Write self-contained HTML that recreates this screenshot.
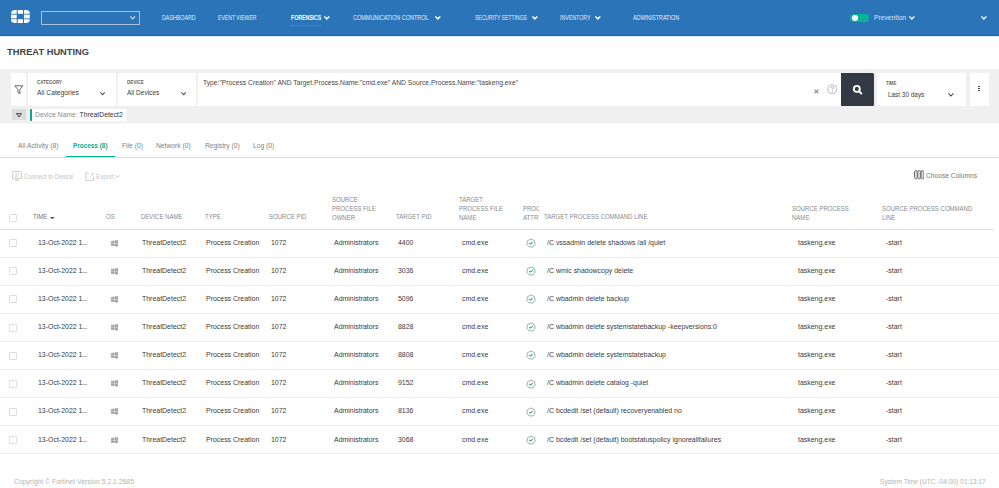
<!DOCTYPE html>
<html><head><meta charset="utf-8">
<style>
html,body{margin:0;padding:0;width:999px;height:488px;overflow:hidden;background:#fff;font-family:"Liberation Sans",sans-serif;}
.a{position:absolute;}
.t{position:absolute;white-space:nowrap;line-height:1;transform-origin:0 0;}
#hdr{position:absolute;left:0;top:0;width:999px;height:35px;background:#2c74b8;border-bottom:1px solid #1f66ad;box-shadow:0 1px 1px rgba(60,130,200,.18);}
.nav{color:#e3edf7;font-size:6px;transform:scaleX(.9);}
.chev{position:absolute;width:3px;height:3px;border-right:1.3px solid #fff;border-bottom:1.3px solid #fff;transform:rotate(45deg);}
.dchev{position:absolute;width:3.2px;height:3.2px;border-right:1px solid #555;border-bottom:1px solid #555;transform:rotate(45deg);}
#band{position:absolute;left:0;top:69px;width:999px;height:54px;background:#f0f0f0;box-shadow:0 1px 0 #f8f8f8;}
.box{position:absolute;background:#fff;border-radius:1.5px;}
.lbl{font-size:5px;font-weight:bold;color:#666;transform:scaleX(.9);}
.val{font-size:6.75px;color:#3a3a3a;}
.tab{font-size:7.1px;color:#828282;transform:scaleX(.95);}
.th{font-size:7px;color:#8a8a8a;line-height:8.7px;transform:scaleX(.86);}
.td{font-size:7.4px;color:#3a3a3a;transform:scaleX(.94);}
.hl{position:absolute;left:0;width:999px;height:1px;background:#ededed;}
.cb{position:absolute;width:6px;height:6px;border:1px solid #dedede;border-radius:1px;background:#fff;box-sizing:content-box;}
</style></head>
<body>
<div id="hdr"></div>
<svg class="a" style="left:11.2px;top:10.1px" width="18.8" height="13" viewBox="0 0 18.8 13"><g fill="#fff">
<path d="M0 3.8 Q0 0 3.8 0 H5.7 V3.8 Z"/><rect x="6.75" y="0" width="5.2" height="3.8"/><path d="M13 0 H15 Q18.8 0 18.8 3.8 H13 Z"/>
<rect x="0" y="4.6" width="5.7" height="3.8"/><rect x="13" y="4.6" width="5.8" height="3.8"/>
<path d="M0 9.2 H5.7 V13 H3.8 Q0 13 0 9.2 Z"/><rect x="6.75" y="9.2" width="5.2" height="3.8"/><path d="M13 9.2 H18.8 Q18.8 13 15 13 H13 Z"/>
</g></svg>
<div class="a" style="left:41px;top:11px;width:96.6px;height:11.8px;border:1px solid #a9c2d8;"></div>
<div class="t nav" style="left:161.8px;top:15.1px;font-size:6.3px;transform:scaleX(0.845)">DASHBOARD</div>
<div class="t nav" style="left:217.7px;top:15.1px;font-size:6.3px;transform:scaleX(0.811)">EVENT VIEWER</div>
<div class="t nav" style="left:290.5px;top:15.1px;font-size:6.3px;transform:scaleX(0.824);font-weight:bold;color:#fff">FORENSICS</div>
<div class="t nav" style="left:353.3px;top:15.1px;font-size:6.3px;transform:scaleX(0.873)">COMMUNICATION CONTROL</div>
<div class="t nav" style="left:475.3px;top:15.1px;font-size:6.3px;transform:scaleX(0.800)">SECURITY SETTINGS</div>
<div class="t nav" style="left:559.9px;top:15.1px;font-size:6.3px;transform:scaleX(0.835)">INVENTORY</div>
<div class="t nav" style="left:632.6px;top:15.1px;font-size:6.3px;transform:scaleX(0.863)">ADMINISTRATION</div>
<svg class="a" style="left:128.6px;top:14.6px" width="7.4" height="5.2" viewBox="-1 -1 7.4 5.2"><path d="M0.4 0.4 L2.7 2.8000000000000003 L5.0 0.4" fill="none" stroke="#d3dbe3" stroke-width="1.2"/></svg>
<svg class="a" style="left:323.4px;top:14.9px" width="7.7" height="5.3" viewBox="-1 -1 7.7 5.3"><path d="M0.4 0.4 L2.85 2.9 L5.3 0.4" fill="none" stroke="#fff" stroke-width="1.5"/></svg>
<svg class="a" style="left:433.8px;top:14.9px" width="7.7" height="5.3" viewBox="-1 -1 7.7 5.3"><path d="M0.4 0.4 L2.85 2.9 L5.3 0.4" fill="none" stroke="#fff" stroke-width="1.5"/></svg>
<svg class="a" style="left:531.3px;top:14.9px" width="7.7" height="5.3" viewBox="-1 -1 7.7 5.3"><path d="M0.4 0.4 L2.85 2.9 L5.3 0.4" fill="none" stroke="#fff" stroke-width="1.5"/></svg>
<svg class="a" style="left:594px;top:14.9px" width="7.7" height="5.3" viewBox="-1 -1 7.7 5.3"><path d="M0.4 0.4 L2.85 2.9 L5.3 0.4" fill="none" stroke="#fff" stroke-width="1.5"/></svg>
<div class="a" style="left:290.2px;top:25px;width:30.9px;height:1.3px;background:#0aab8f"></div>
<div class="a" style="left:850.3px;top:13.8px;width:19px;height:8.2px;border-radius:4.1px;background:#07b595"></div>
<div class="a" style="left:852.4px;top:14.9px;width:6px;height:6px;border-radius:50%;background:#fff"></div>
<div class="t " style="left:873.7px;top:14.3px;font-size:7.3px;color:#d4e5f6;transform:scaleX(.92)">Prevention</div>
<svg class="a" style="left:907.5px;top:15px" width="7.8" height="5.4" viewBox="-1 -1 7.8 5.4"><path d="M0.4 0.4 L2.9 3.0 L5.3999999999999995 0.4" fill="none" stroke="#fff" stroke-width="1.3"/></svg>
<svg class="a" style="left:979.5px;top:14.5px" width="7.8" height="5.4" viewBox="-1 -1 7.8 5.4"><path d="M0.4 0.4 L2.9 3.0 L5.3999999999999995 0.4" fill="none" stroke="#fff" stroke-width="1.3"/></svg>
<div class="t " style="left:7px;top:47.2px;font-size:9.9px;font-weight:bold;color:#454545;transform:scaleX(.943)">THREAT HUNTING</div>
<div id="band"></div>
<div class="box" style="left:11px;top:73px;width:15px;height:33px"></div>
<div class="box" style="left:27.8px;top:73px;width:88.4px;height:33px"></div>
<div class="box" style="left:117.6px;top:73px;width:78.6px;height:33px"></div>
<div class="box" style="left:197.7px;top:73px;width:645px;height:33px;border-radius:0"></div>
<div class="a" style="left:841px;top:73px;width:33px;height:33px;background:#333a46;border-radius:0 1.5px 1.5px 0"></div>
<div class="box" style="left:877px;top:73.2px;width:88.8px;height:32.5px"></div>
<div class="box" style="left:970.3px;top:73.2px;width:18.6px;height:32.5px"></div>
<svg class="a" style="left:14.2px;top:85px" width="10" height="10" viewBox="0 0 10 10"><path d="M0.8 0.8 H8.8 L5.9 4.6 V8.6 L3.9 7.6 V4.6 Z" fill="none" stroke="#555" stroke-width="0.9" stroke-linejoin="round"/></svg>
<div class="t lbl" style="left:37px;top:80.4px;">CATEGORY</div>
<div class="t val" style="left:37px;top:90.4px;font-size:7.1px;transform:scaleX(.95)">All Categories</div>
<svg class="a" style="left:99.1px;top:90.6px" width="7.2" height="5.1" viewBox="-1 -1 7.2 5.1"><path d="M0.4 0.4 L2.6 2.7 L4.8 0.4" fill="none" stroke="#555" stroke-width="1.1"/></svg>
<div class="t lbl" style="left:127.2px;top:80.4px;">DEVICE</div>
<div class="t val" style="left:127.2px;top:90.4px;font-size:7.1px;transform:scaleX(.92)">All Devices</div>
<svg class="a" style="left:179.6px;top:90.6px" width="7.2" height="5.1" viewBox="-1 -1 7.2 5.1"><path d="M0.4 0.4 L2.6 2.7 L4.8 0.4" fill="none" stroke="#555" stroke-width="1.1"/></svg>
<div class="t val" style="left:203.3px;top:79.8px;font-size:7.1px;transform:scaleX(.949);color:#474747">Type:"Process Creation" AND Target.Process.Name:"cmd.exe" AND Source.Process.Name:"taskeng.exe"</div>
<svg class="a" style="left:813.6px;top:89px" width="5" height="5" viewBox="0 0 5 5"><path d="M0.6 0.6 L4.4 4.4 M4.4 0.6 L0.6 4.4" stroke="#8a8a8a" stroke-width="1.2"/></svg>
<svg class="a" style="left:826.6px;top:83.7px" width="10.5" height="10.5" viewBox="0 0 10.5 10.5"><circle cx="5.25" cy="5.25" r="4.5" fill="none" stroke="#a5a5a5" stroke-width="0.8"/><path d="M3.8 4.1 Q3.8 2.6 5.25 2.6 Q6.7 2.6 6.7 3.9 Q6.7 4.8 5.25 5.4 V6.4" fill="none" stroke="#a5a5a5" stroke-width="0.8"/><circle cx="5.25" cy="7.8" r="0.5" fill="#a5a5a5"/></svg>
<svg class="a" style="left:851px;top:83px" width="12" height="12" viewBox="0 0 12 12"><circle cx="5.8" cy="5.9" r="3.0" fill="none" stroke="#fff" stroke-width="1.9"/><path d="M8.2 8.3 L10.3 10.5" stroke="#fff" stroke-width="1.9" stroke-linecap="round"/></svg>
<div class="t lbl" style="left:886.4px;top:80.6px;font-size:5.2px;transform:scaleX(.83)">TIME</div>
<div class="t val" style="left:887.8px;top:90.6px;font-size:7.2px;transform:scaleX(.89)">Last 30 days</div>
<svg class="a" style="left:947.2px;top:91.8px" width="7.8" height="5.4" viewBox="-1 -1 7.8 5.4"><path d="M0.4 0.4 L2.9 3.0 L5.3999999999999995 0.4" fill="none" stroke="#444" stroke-width="1.05"/></svg>
<div class="a" style="left:978.2px;top:85.9px;width:1.4px;height:1.3px;background:#444"></div>
<div class="a" style="left:978.2px;top:88px;width:1.4px;height:1.3px;background:#444"></div>
<div class="a" style="left:978.2px;top:90.1px;width:1.4px;height:1.3px;background:#444"></div>
<div class="a" style="left:11.9px;top:109.4px;width:14px;height:10.4px;background:#dcdcdc;border-radius:1px"></div>
<svg class="a" style="left:16.4px;top:112.7px" width="6" height="4.8" viewBox="0 0 6 4.8"><path d="M0.6 0.6 H5.4 L3 4.1 Z" fill="none" stroke="#444" stroke-width="1.0" stroke-linejoin="round"/></svg>
<div class="box" style="left:29.6px;top:108.6px;width:96.4px;height:12px;border-radius:1px"></div>
<div class="a" style="left:29.6px;top:108.6px;width:2.4px;height:12px;background:#05ad90;border-radius:1px 0 0 1px"></div>
<div class="t " style="left:35px;top:111.6px;font-size:6.82px;color:#8a8a8a">Device Name: <span style="color:#333">ThreatDetect2</span></div>
<div class="t tab" style="left:18px;top:143.0px;">All Activity (8)</div>
<div class="t tab" style="left:72.8px;top:143.0px;font-weight:bold;color:#05ad90;font-size:6.9px;transform:scaleX(.93)">Process (8)</div>
<div class="t tab" style="left:121.6px;top:143.0px;">File (0)</div>
<div class="t tab" style="left:155.6px;top:143.0px;">Network (0)</div>
<div class="t tab" style="left:205px;top:143.0px;">Registry (0)</div>
<div class="t tab" style="left:253px;top:143.0px;">Log (0)</div>
<div class="a" style="left:65.6px;top:155.5px;width:49.3px;height:1.5px;background:#05ad90"></div>
<div class="a" style="left:0;top:157px;width:999px;height:1px;background:#dcdcdc"></div>
<svg class="a" style="left:12px;top:171px" width="10" height="10" viewBox="0 0 10 10"><rect x="0.5" y="0.5" width="8.9" height="7.1" rx="0.6" fill="none" stroke="#c6c6c6" stroke-width="0.9"/><path d="M4.9 7.6 V9.2 M2.8 9.4 H7 M2.9 3.1 H6.8 M5.9 2.4 L6.8 3.1 M7 5.1 H3.1 M4 5.8 L3.1 5.1" fill="none" stroke="#c6c6c6" stroke-width="0.8"/></svg>
<div class="t " style="left:23.7px;top:174.3px;font-size:6.5px;color:#c4c4c4;transform:scaleX(.928)">Connect to Device</div>
<svg class="a" style="left:84.8px;top:171.8px" width="10" height="9.5" viewBox="0 0 10 9.5"><path d="M3.9 0.9 H0.9 V8.6 H8.5 V4.5" fill="none" stroke="#c8c8c8" stroke-width="0.9"/><path d="M5.4 5 L8 1.4 M6.3 1.3 H8.1 V3.1" fill="none" stroke="#c8c8c8" stroke-width="0.85"/></svg>
<div class="t " style="left:95.5px;top:173.9px;font-size:6.9px;color:#c4c4c4;transform:scaleX(.9)">Export</div>
<svg class="a" style="left:114.1px;top:174.0px" width="6.8" height="4.9" viewBox="-1 -1 6.8 4.9"><path d="M0.4 0.4 L2.4 2.5 L4.3999999999999995 0.4" fill="none" stroke="#c4c4c4" stroke-width="1.0"/></svg>
<svg class="a" style="left:913.7px;top:170.4px" width="10.4" height="9.4" viewBox="0 0 10.4 9.4"><g fill="#dcdcdc" stroke="#737373" stroke-width="1"><rect x="0.5" y="0.5" width="2.8" height="8.4" rx="1.3"/><rect x="3.8" y="0.5" width="2.8" height="8.4" rx="1.3"/><rect x="7.1" y="0.5" width="2.8" height="8.4" rx="1.3"/></g></svg>
<div class="t " style="left:925.6px;top:172.0px;font-size:7px;color:#777;transform:scaleX(.952)">Choose Columns</div>
<div class="cb" style="left:8.5px;top:213.8px"></div>
<div class="t th" style="left:33.3px;top:213.3px;color:#707070">TIME</div>
<svg class="a" style="left:50.2px;top:216.6px" width="5" height="2.6" viewBox="0 0 5 2.6"><path d="M0 0 H4.6 L2.3 2.4Z" fill="#555"/></svg>
<div class="t th" style="left:105.5px;top:213.3px;">OS</div>
<div class="t th" style="left:141.25px;top:213.3px;">DEVICE NAME</div>
<div class="t th" style="left:204.5px;top:213.3px;">TYPE</div>
<div class="t th" style="left:269px;top:213.3px;">SOURCE PID</div>
<div class="t th" style="left:332.4px;top:196.20000000000002px;">SOURCE<br>PROCESS FILE<br>OWNER</div>
<div class="t th" style="left:395.7px;top:213.3px;">TARGET PID</div>
<div class="t th" style="left:459px;top:196.20000000000002px;">TARGET<br>PROCESS FILE<br>NAME</div>
<div class="a" style="left:522.8px;top:204.8px;width:16px;height:20px;overflow:hidden"><div class="t th" style="left:0;top:0">PROCESS<br>ATTR</div></div>
<div class="t th" style="left:543.6px;top:213.3px;">TARGET PROCESS COMMAND LINE</div>
<div class="t th" style="left:792.3px;top:204.8px;">SOURCE PROCESS<br>NAME</div>
<div class="t th" style="left:882px;top:204.8px;">SOURCE PROCESS COMMAND<br>LINE</div>
<div class="hl" style="top:229px;width:994px;background:#e2e2e2"></div>
<div class="cb" style="left:9.1px;top:239.2px"></div>
<div class="t td" style="left:37.5px;top:238.80px;">13-Oct-2022 1<span style="letter-spacing:-.45px">...</span></div>
<svg class="a" style="left:110.9px;top:239.8px" width="7.2" height="6.8" viewBox="0 0 7.2 6.8"><path fill="#a8a8a8" d="M0 1 L3.4 0.55 V3.2 H0Z M3.8 0.5 L7.2 0 V3.2 H3.8Z M0 3.6 H3.4 V6.3 L0 5.8Z M3.8 3.6 H7.2 V6.8 L3.8 6.3Z"/></svg>
<div class="t td" style="left:141.75px;top:238.80px;">ThreatDetect2</div>
<div class="t td" style="left:205.5px;top:238.80px;">Process Creation</div>
<div class="t td" style="left:270.5px;top:238.80px;">1072</div>
<div class="t td" style="left:334.2px;top:238.80px;">Administrators</div>
<div class="t td" style="left:398px;top:238.80px;">4400</div>
<div class="t td" style="left:461.8px;top:238.80px;">cmd.exe</div>
<div class="t td" style="left:546.5px;top:238.80px;">/C vssadmin delete shadows /all /quiet</div>
<div class="t td" style="left:797.7px;top:238.80px;">taskeng.exe</div>
<div class="t td" style="left:886px;top:238.80px;">-start</div>
<svg class="a" style="left:526px;top:238.0px" width="10" height="10" viewBox="0 0 10 10"><path fill="none" stroke="#a0a0a0" stroke-width="0.9" d="M5 1 L8.4 2.6 L9.2 6.1 L7 8.9 H3 L0.8 6.1 L1.6 2.6Z"/><path fill="none" stroke="#22b596" stroke-width="1.2" d="M3.3 5.2 L4.5 6.1 L6.8 4.1"/></svg>
<div class="hl" style="top:257px"></div>
<div class="cb" style="left:9.1px;top:267.3px"></div>
<div class="t td" style="left:37.5px;top:266.90px;">13-Oct-2022 1<span style="letter-spacing:-.45px">...</span></div>
<svg class="a" style="left:110.9px;top:267.90000000000003px" width="7.2" height="6.8" viewBox="0 0 7.2 6.8"><path fill="#a8a8a8" d="M0 1 L3.4 0.55 V3.2 H0Z M3.8 0.5 L7.2 0 V3.2 H3.8Z M0 3.6 H3.4 V6.3 L0 5.8Z M3.8 3.6 H7.2 V6.8 L3.8 6.3Z"/></svg>
<div class="t td" style="left:141.75px;top:266.90px;">ThreatDetect2</div>
<div class="t td" style="left:205.5px;top:266.90px;">Process Creation</div>
<div class="t td" style="left:270.5px;top:266.90px;">1072</div>
<div class="t td" style="left:334.2px;top:266.90px;">Administrators</div>
<div class="t td" style="left:398px;top:266.90px;">3036</div>
<div class="t td" style="left:461.8px;top:266.90px;">cmd.exe</div>
<div class="t td" style="left:546.5px;top:266.90px;">/C wmic shadowcopy delete</div>
<div class="t td" style="left:797.7px;top:266.90px;">taskeng.exe</div>
<div class="t td" style="left:886px;top:266.90px;">-start</div>
<svg class="a" style="left:526px;top:266.1px" width="10" height="10" viewBox="0 0 10 10"><path fill="none" stroke="#a0a0a0" stroke-width="0.9" d="M5 1 L8.4 2.6 L9.2 6.1 L7 8.9 H3 L0.8 6.1 L1.6 2.6Z"/><path fill="none" stroke="#22b596" stroke-width="1.2" d="M3.3 5.2 L4.5 6.1 L6.8 4.1"/></svg>
<div class="hl" style="top:285px"></div>
<div class="cb" style="left:9.1px;top:295.4px"></div>
<div class="t td" style="left:37.5px;top:295.00px;">13-Oct-2022 1<span style="letter-spacing:-.45px">...</span></div>
<svg class="a" style="left:110.9px;top:296.0px" width="7.2" height="6.8" viewBox="0 0 7.2 6.8"><path fill="#a8a8a8" d="M0 1 L3.4 0.55 V3.2 H0Z M3.8 0.5 L7.2 0 V3.2 H3.8Z M0 3.6 H3.4 V6.3 L0 5.8Z M3.8 3.6 H7.2 V6.8 L3.8 6.3Z"/></svg>
<div class="t td" style="left:141.75px;top:295.00px;">ThreatDetect2</div>
<div class="t td" style="left:205.5px;top:295.00px;">Process Creation</div>
<div class="t td" style="left:270.5px;top:295.00px;">1072</div>
<div class="t td" style="left:334.2px;top:295.00px;">Administrators</div>
<div class="t td" style="left:398px;top:295.00px;">5096</div>
<div class="t td" style="left:461.8px;top:295.00px;">cmd.exe</div>
<div class="t td" style="left:546.5px;top:295.00px;">/C wbadmin delete backup</div>
<div class="t td" style="left:797.7px;top:295.00px;">taskeng.exe</div>
<div class="t td" style="left:886px;top:295.00px;">-start</div>
<svg class="a" style="left:526px;top:294.2px" width="10" height="10" viewBox="0 0 10 10"><path fill="none" stroke="#a0a0a0" stroke-width="0.9" d="M5 1 L8.4 2.6 L9.2 6.1 L7 8.9 H3 L0.8 6.1 L1.6 2.6Z"/><path fill="none" stroke="#22b596" stroke-width="1.2" d="M3.3 5.2 L4.5 6.1 L6.8 4.1"/></svg>
<div class="hl" style="top:313px"></div>
<div class="cb" style="left:9.1px;top:323.5px"></div>
<div class="t td" style="left:37.5px;top:323.10px;">13-Oct-2022 1<span style="letter-spacing:-.45px">...</span></div>
<svg class="a" style="left:110.9px;top:324.1px" width="7.2" height="6.8" viewBox="0 0 7.2 6.8"><path fill="#a8a8a8" d="M0 1 L3.4 0.55 V3.2 H0Z M3.8 0.5 L7.2 0 V3.2 H3.8Z M0 3.6 H3.4 V6.3 L0 5.8Z M3.8 3.6 H7.2 V6.8 L3.8 6.3Z"/></svg>
<div class="t td" style="left:141.75px;top:323.10px;">ThreatDetect2</div>
<div class="t td" style="left:205.5px;top:323.10px;">Process Creation</div>
<div class="t td" style="left:270.5px;top:323.10px;">1072</div>
<div class="t td" style="left:334.2px;top:323.10px;">Administrators</div>
<div class="t td" style="left:398px;top:323.10px;">8828</div>
<div class="t td" style="left:461.8px;top:323.10px;">cmd.exe</div>
<div class="t td" style="left:546.5px;top:323.10px;">/C wbadmin delete systemstatebackup -keepversions:0</div>
<div class="t td" style="left:797.7px;top:323.10px;">taskeng.exe</div>
<div class="t td" style="left:886px;top:323.10px;">-start</div>
<svg class="a" style="left:526px;top:322.3px" width="10" height="10" viewBox="0 0 10 10"><path fill="none" stroke="#a0a0a0" stroke-width="0.9" d="M5 1 L8.4 2.6 L9.2 6.1 L7 8.9 H3 L0.8 6.1 L1.6 2.6Z"/><path fill="none" stroke="#22b596" stroke-width="1.2" d="M3.3 5.2 L4.5 6.1 L6.8 4.1"/></svg>
<div class="hl" style="top:341px"></div>
<div class="cb" style="left:9.1px;top:351.6px"></div>
<div class="t td" style="left:37.5px;top:351.20px;">13-Oct-2022 1<span style="letter-spacing:-.45px">...</span></div>
<svg class="a" style="left:110.9px;top:352.20000000000005px" width="7.2" height="6.8" viewBox="0 0 7.2 6.8"><path fill="#a8a8a8" d="M0 1 L3.4 0.55 V3.2 H0Z M3.8 0.5 L7.2 0 V3.2 H3.8Z M0 3.6 H3.4 V6.3 L0 5.8Z M3.8 3.6 H7.2 V6.8 L3.8 6.3Z"/></svg>
<div class="t td" style="left:141.75px;top:351.20px;">ThreatDetect2</div>
<div class="t td" style="left:205.5px;top:351.20px;">Process Creation</div>
<div class="t td" style="left:270.5px;top:351.20px;">1072</div>
<div class="t td" style="left:334.2px;top:351.20px;">Administrators</div>
<div class="t td" style="left:398px;top:351.20px;">8808</div>
<div class="t td" style="left:461.8px;top:351.20px;">cmd.exe</div>
<div class="t td" style="left:546.5px;top:351.20px;">/C wbadmin delete systemstatebackup</div>
<div class="t td" style="left:797.7px;top:351.20px;">taskeng.exe</div>
<div class="t td" style="left:886px;top:351.20px;">-start</div>
<svg class="a" style="left:526px;top:350.4px" width="10" height="10" viewBox="0 0 10 10"><path fill="none" stroke="#a0a0a0" stroke-width="0.9" d="M5 1 L8.4 2.6 L9.2 6.1 L7 8.9 H3 L0.8 6.1 L1.6 2.6Z"/><path fill="none" stroke="#22b596" stroke-width="1.2" d="M3.3 5.2 L4.5 6.1 L6.8 4.1"/></svg>
<div class="hl" style="top:369px"></div>
<div class="cb" style="left:9.1px;top:379.7px"></div>
<div class="t td" style="left:37.5px;top:379.30px;">13-Oct-2022 1<span style="letter-spacing:-.45px">...</span></div>
<svg class="a" style="left:110.9px;top:380.3px" width="7.2" height="6.8" viewBox="0 0 7.2 6.8"><path fill="#a8a8a8" d="M0 1 L3.4 0.55 V3.2 H0Z M3.8 0.5 L7.2 0 V3.2 H3.8Z M0 3.6 H3.4 V6.3 L0 5.8Z M3.8 3.6 H7.2 V6.8 L3.8 6.3Z"/></svg>
<div class="t td" style="left:141.75px;top:379.30px;">ThreatDetect2</div>
<div class="t td" style="left:205.5px;top:379.30px;">Process Creation</div>
<div class="t td" style="left:270.5px;top:379.30px;">1072</div>
<div class="t td" style="left:334.2px;top:379.30px;">Administrators</div>
<div class="t td" style="left:398px;top:379.30px;">9152</div>
<div class="t td" style="left:461.8px;top:379.30px;">cmd.exe</div>
<div class="t td" style="left:546.5px;top:379.30px;">/C wbadmin delete catalog -quiet</div>
<div class="t td" style="left:797.7px;top:379.30px;">taskeng.exe</div>
<div class="t td" style="left:886px;top:379.30px;">-start</div>
<svg class="a" style="left:526px;top:378.5px" width="10" height="10" viewBox="0 0 10 10"><path fill="none" stroke="#a0a0a0" stroke-width="0.9" d="M5 1 L8.4 2.6 L9.2 6.1 L7 8.9 H3 L0.8 6.1 L1.6 2.6Z"/><path fill="none" stroke="#22b596" stroke-width="1.2" d="M3.3 5.2 L4.5 6.1 L6.8 4.1"/></svg>
<div class="hl" style="top:397px"></div>
<div class="cb" style="left:9.1px;top:407.79999999999995px"></div>
<div class="t td" style="left:37.5px;top:407.40px;">13-Oct-2022 1<span style="letter-spacing:-.45px">...</span></div>
<svg class="a" style="left:110.9px;top:408.4px" width="7.2" height="6.8" viewBox="0 0 7.2 6.8"><path fill="#a8a8a8" d="M0 1 L3.4 0.55 V3.2 H0Z M3.8 0.5 L7.2 0 V3.2 H3.8Z M0 3.6 H3.4 V6.3 L0 5.8Z M3.8 3.6 H7.2 V6.8 L3.8 6.3Z"/></svg>
<div class="t td" style="left:141.75px;top:407.40px;">ThreatDetect2</div>
<div class="t td" style="left:205.5px;top:407.40px;">Process Creation</div>
<div class="t td" style="left:270.5px;top:407.40px;">1072</div>
<div class="t td" style="left:334.2px;top:407.40px;">Administrators</div>
<div class="t td" style="left:398px;top:407.40px;">8136</div>
<div class="t td" style="left:461.8px;top:407.40px;">cmd.exe</div>
<div class="t td" style="left:546.5px;top:407.40px;">/C bcdedit /set (default) recoveryenabled no</div>
<div class="t td" style="left:797.7px;top:407.40px;">taskeng.exe</div>
<div class="t td" style="left:886px;top:407.40px;">-start</div>
<svg class="a" style="left:526px;top:406.6px" width="10" height="10" viewBox="0 0 10 10"><path fill="none" stroke="#a0a0a0" stroke-width="0.9" d="M5 1 L8.4 2.6 L9.2 6.1 L7 8.9 H3 L0.8 6.1 L1.6 2.6Z"/><path fill="none" stroke="#22b596" stroke-width="1.2" d="M3.3 5.2 L4.5 6.1 L6.8 4.1"/></svg>
<div class="hl" style="top:425px"></div>
<div class="cb" style="left:9.1px;top:435.9px"></div>
<div class="t td" style="left:37.5px;top:435.50px;">13-Oct-2022 1<span style="letter-spacing:-.45px">...</span></div>
<svg class="a" style="left:110.9px;top:436.5px" width="7.2" height="6.8" viewBox="0 0 7.2 6.8"><path fill="#a8a8a8" d="M0 1 L3.4 0.55 V3.2 H0Z M3.8 0.5 L7.2 0 V3.2 H3.8Z M0 3.6 H3.4 V6.3 L0 5.8Z M3.8 3.6 H7.2 V6.8 L3.8 6.3Z"/></svg>
<div class="t td" style="left:141.75px;top:435.50px;">ThreatDetect2</div>
<div class="t td" style="left:205.5px;top:435.50px;">Process Creation</div>
<div class="t td" style="left:270.5px;top:435.50px;">1072</div>
<div class="t td" style="left:334.2px;top:435.50px;">Administrators</div>
<div class="t td" style="left:398px;top:435.50px;">3068</div>
<div class="t td" style="left:461.8px;top:435.50px;">cmd.exe</div>
<div class="t td" style="left:546.5px;top:435.50px;">/C bcdedit /set (default) bootstatuspolicy ignoreallfailures</div>
<div class="t td" style="left:797.7px;top:435.50px;">taskeng.exe</div>
<div class="t td" style="left:886px;top:435.50px;">-start</div>
<svg class="a" style="left:526px;top:434.7px" width="10" height="10" viewBox="0 0 10 10"><path fill="none" stroke="#a0a0a0" stroke-width="0.9" d="M5 1 L8.4 2.6 L9.2 6.1 L7 8.9 H3 L0.8 6.1 L1.6 2.6Z"/><path fill="none" stroke="#22b596" stroke-width="1.2" d="M3.3 5.2 L4.5 6.1 L6.8 4.1"/></svg>
<div class="hl" style="top:453px"></div>
<div class="t " style="left:13.6px;top:478.1px;font-size:7.3px;color:#b4b4b4;transform:scaleX(.935)">Copyright © Fortinet Version 5.2.1.2685</div>
<div class="t " style="left:880px;top:478.1px;font-size:7.2px;color:#b4b4b4;transform:scaleX(.915)">System Time (UTC -04:00) 01:13:17</div>
</body></html>
